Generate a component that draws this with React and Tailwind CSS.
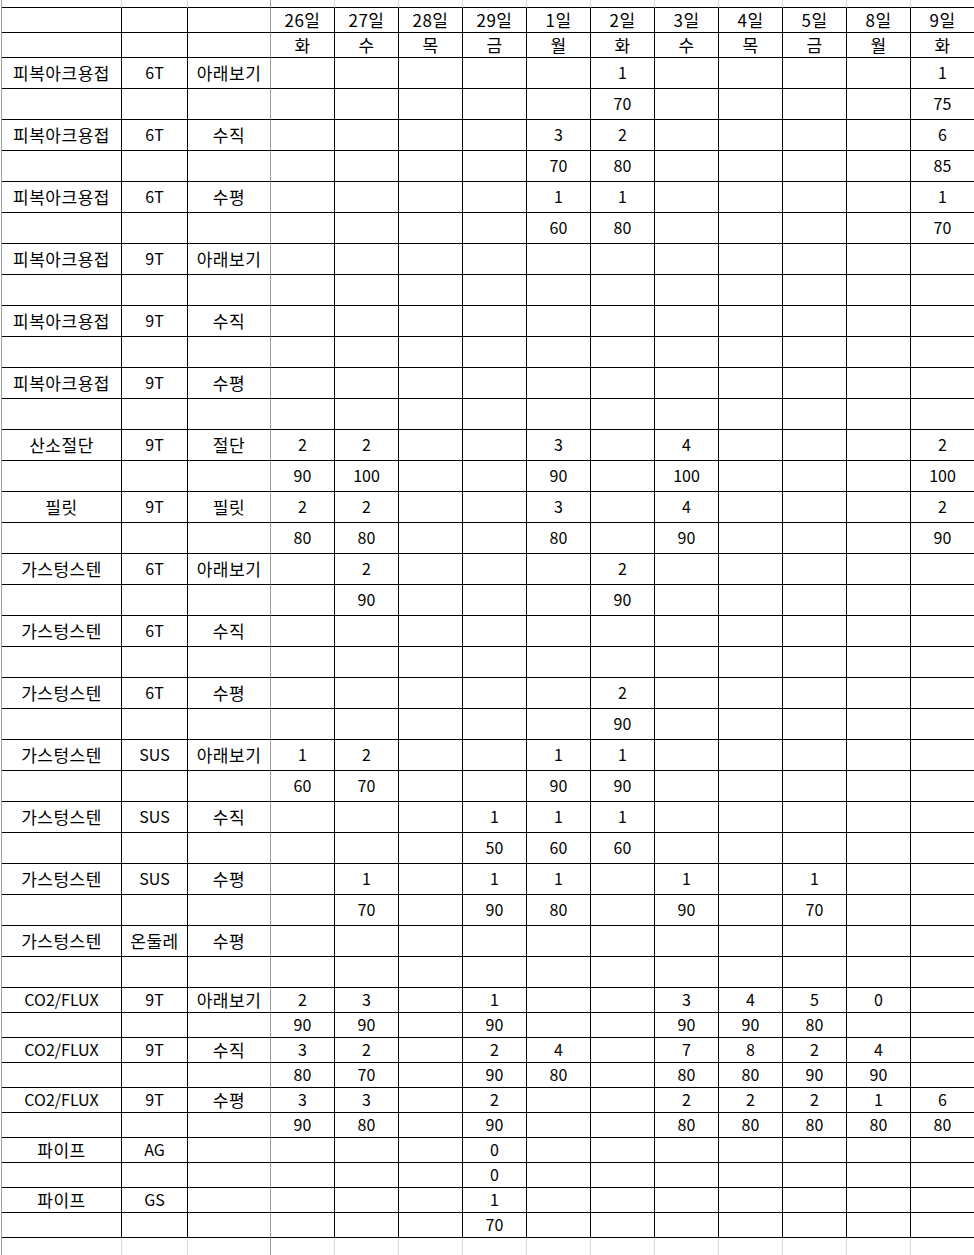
import React from "react";

const days = ["26일", "27일", "28일", "29일", "1일", "2일", "3일", "4일", "5일", "8일", "9일"];
const wd = ["화", "수", "목", "금", "월", "화", "수", "목", "금", "월", "화"];
const idx = { "26": 0, "27": 1, "28": 2, "29": 3, "1": 4, "2": 5, "3": 6, "4": 7, "5": 8, "8": 9, "9": 10 };

function r(a, b, c, vals = {}) {
  const d = Array(11).fill("");
  Object.entries(vals).forEach(([k, v]) => {
    d[idx[k]] = v;
  });
  return [a, b, c, ...d];
}

const tall = [
  r("피복아크용접", "6T", "아래보기", { 2: "1", 9: "1" }),
  r("", "", "", { 2: "70", 9: "75" }),
  r("피복아크용접", "6T", "수직", { 1: "3", 2: "2", 9: "6" }),
  r("", "", "", { 1: "70", 2: "80", 9: "85" }),
  r("피복아크용접", "6T", "수평", { 1: "1", 2: "1", 9: "1" }),
  r("", "", "", { 1: "60", 2: "80", 9: "70" }),
  r("피복아크용접", "9T", "아래보기"),
  r("", "", ""),
  r("피복아크용접", "9T", "수직"),
  r("", "", ""),
  r("피복아크용접", "9T", "수평"),
  r("", "", ""),
  r("산소절단", "9T", "절단", { 26: "2", 27: "2", 1: "3", 3: "4", 9: "2" }),
  r("", "", "", { 26: "90", 27: "100", 1: "90", 3: "100", 9: "100" }),
  r("필릿", "9T", "필릿", { 26: "2", 27: "2", 1: "3", 3: "4", 9: "2" }),
  r("", "", "", { 26: "80", 27: "80", 1: "80", 3: "90", 9: "90" }),
  r("가스텅스텐", "6T", "아래보기", { 27: "2", 2: "2" }),
  r("", "", "", { 27: "90", 2: "90" }),
  r("가스텅스텐", "6T", "수직"),
  r("", "", ""),
  r("가스텅스텐", "6T", "수평", { 2: "2" }),
  r("", "", "", { 2: "90" }),
  r("가스텅스텐", "SUS", "아래보기", { 26: "1", 27: "2", 1: "1", 2: "1" }),
  r("", "", "", { 26: "60", 27: "70", 1: "90", 2: "90" }),
  r("가스텅스텐", "SUS", "수직", { 29: "1", 1: "1", 2: "1" }),
  r("", "", "", { 29: "50", 1: "60", 2: "60" }),
  r("가스텅스텐", "SUS", "수평", { 27: "1", 29: "1", 1: "1", 3: "1", 5: "1" }),
  r("", "", "", { 27: "70", 29: "90", 1: "80", 3: "90", 5: "70" }),
  r("가스텅스텐", "온둘레", "수평"),
  r("", "", ""),
];

const short = [
  r("CO2/FLUX", "9T", "아래보기", { 26: "2", 27: "3", 29: "1", 3: "3", 4: "4", 5: "5", 8: "0" }),
  r("", "", "", { 26: "90", 27: "90", 29: "90", 3: "90", 4: "90", 5: "80" }),
  r("CO2/FLUX", "9T", "수직", { 26: "3", 27: "2", 29: "2", 1: "4", 3: "7", 4: "8", 5: "2", 8: "4" }),
  r("", "", "", { 26: "80", 27: "70", 29: "90", 1: "80", 3: "80", 4: "80", 5: "90", 8: "90" }),
  r("CO2/FLUX", "9T", "수평", { 26: "3", 27: "3", 29: "2", 3: "2", 4: "2", 5: "2", 8: "1", 9: "6" }),
  r("", "", "", { 26: "90", 27: "80", 29: "90", 3: "80", 4: "80", 5: "80", 8: "80", 9: "80" }),
  r("파이프", "AG", "", { 29: "0" }),
  r("", "", "", { 29: "0" }),
  r("파이프", "GS", "", { 29: "1" }),
  r("", "", "", { 29: "70" }),
];

const grid = "grid grid-cols-[120px_66px_83px_repeat(11,64px)]";
const hangul = /[가-힣]/;

function Row({ cells, h }) {
  return (
    <div className={grid}>
      {cells.map((c, i) => (
        <div
          key={i}
          className={`${h} flex items-center justify-center pb-[2px] border-b border-r border-b-black ${
            i === 2 ? "border-r-[#9f9f9f]" : "border-r-black"
          } whitespace-nowrap leading-none`}
        >
          {c ? (
            <span className={hangul.test(c) ? "text-[17px] tracking-[0.5px]" : "text-[16px]"}>{c}</span>
          ) : null}
        </div>
      ))}
    </div>
  );
}

function Blank({ h, bottom }) {
  return (
    <div className={grid}>
      {Array.from({ length: 14 }).map((_, i) => (
        <div
          key={i}
          className={`${h} border-r ${bottom ? "border-b border-b-black" : ""} ${
            i === 2 ? "border-r-[#9f9f9f]" : "border-r-[#dcdcdc]"
          }`}
        />
      ))}
    </div>
  );
}

export default function App() {
  return (
    <div className="w-[974px] h-[1255px] overflow-hidden bg-white text-black text-[16px] font-['Noto_Sans_CJK_KR','Noto_Sans',sans-serif]">
      <div className="pl-px">
        <div className="border-l border-l-[#9f9f9f] w-[975px]">
          <Blank h="h-[8px]" bottom />
          <Row cells={["", "", "", ...days]} h="h-[25px]" />
          <Row cells={["", "", "", ...wd]} h="h-[25px]" />
          {tall.map((c, i) => (
            <Row key={"t" + i} cells={c} h="h-[31px]" />
          ))}
          {short.map((c, i) => (
            <Row key={"s" + i} cells={c} h="h-[25px]" />
          ))}
          <Blank h="h-[25px]" />
        </div>
      </div>
    </div>
  );
}
